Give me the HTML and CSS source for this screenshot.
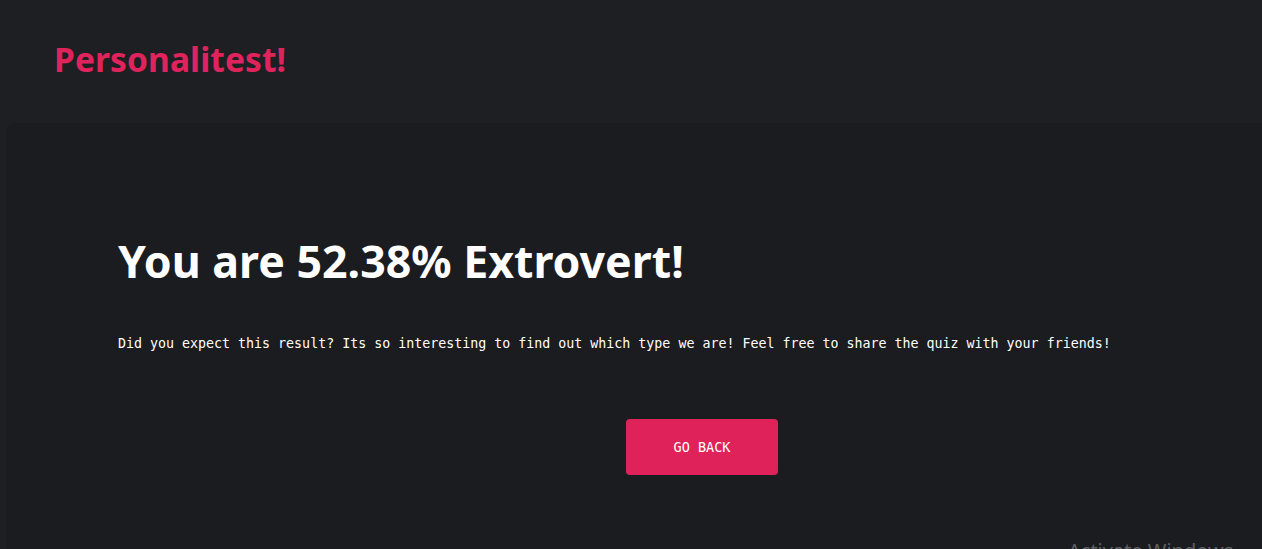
FILE: index.html
```html
<!DOCTYPE html>
<html lang="en">
<head>
<meta charset="utf-8">
<title>Personalitest!</title>
<link rel="stylesheet" href="styles.css">
</head>
<body>
<header class="site-header">
  <a class="logo" href="#">Personalitest!</a>
</header>
<main class="card">
  <div class="card-inner">
    <h1 class="result-title">You are 52.38% Extrovert!</h1>
    <p class="result-text">Did you expect this result? Its so interesting to find out which type we are! Feel free to share the quiz with your friends!</p>
    <div class="actions">
      <button class="btn-back" type="button">GO BACK</button>
    </div>
  </div>
</main>
<div class="watermark">Activate Windows</div>
</body>
</html>
```
FILE: styles.css
```css
html, body {
  margin: 0;
  padding: 0;
}
body {
  background: #1e1f23;
  width: 1262px;
  height: 549px;
  overflow: hidden;
  position: relative;
  font-family: "DejaVu Sans Mono", "Liberation Mono", monospace;
  color: #fff;
}
.site-header {
  height: 123px;
  padding-left: 54px;
  box-sizing: border-box;
  display: flex;
  align-items: flex-start;
  padding-top: 37px;
}
.logo {
  font-family: "Noto Sans", "Liberation Sans", sans-serif;
  font-weight: 700;
  font-size: 33.5px;
  line-height: 44px;
  color: #e0235c;
  text-decoration: none;
  letter-spacing: 0.1px;
}
.card {
  margin-left: 6px;
  width: 1392px;
  height: 440px;
  background: #1b1c20;
  border-radius: 10px;
  box-sizing: border-box;
  padding: 0 112px;
}
.card-inner {
  padding-top: 107px;
}
.result-title {
  margin: 0;
  font-family: "Noto Sans", "Liberation Sans", sans-serif;
  font-weight: 700;
  font-size: 44.7px;
  line-height: 62px;
  color: #fff;
}
.result-text {
  margin: 42px 0 0;
  font-size: 13.3px;
  line-height: 20px;
  color: #fff;
}
.actions {
  margin-top: 65px;
  text-align: center;
}
.btn-back {
  width: 152px;
  height: 56px;
  border: 0;
  border-radius: 4px;
  background: #e0225a;
  color: #fff;
  font-family: "DejaVu Sans Mono", "Liberation Mono", monospace;
  font-size: 13.5px;
  cursor: pointer;
}
.watermark {
  position: absolute;
  left: 1068px;
  top: 539px;
  font-family: "Noto Sans", "Liberation Sans", sans-serif;
  font-size: 20px;
  line-height: 24px;
  color: #5e5f63;
  white-space: nowrap;
}
```
